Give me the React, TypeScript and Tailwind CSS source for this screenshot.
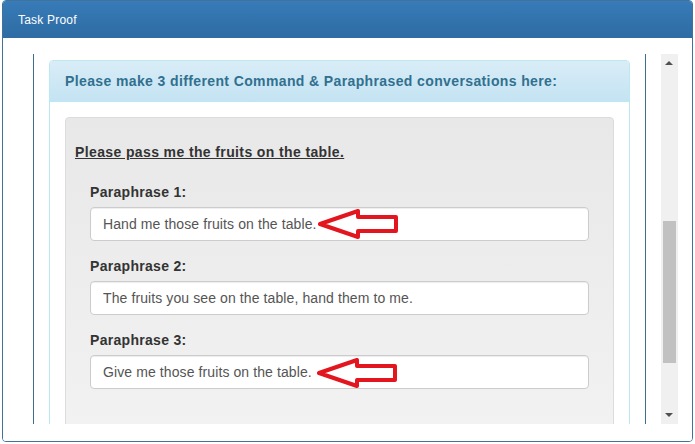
import React from "react";

function Arrow({ left, top }: { left: number; top: number }) {
  return (
    <svg
      className="absolute"
      style={{ left, top }}
      width={82}
      height={32}
      viewBox="0 0 82 32"
    >
      <polygon
        points="2,16 40,3 40,9 78,9 78,23 40,23 40,29"
        fill="none"
        stroke="#e3161f"
        strokeWidth={4}
        strokeLinejoin="round"
      />
    </svg>
  );
}

function Group({
  label,
  value,
  arrow,
}: {
  label: string;
  value: string;
  arrow?: { left: number; top: number };
}) {
  return (
    <div className="mb-[15px]">
      <div className="text-[14px] leading-[20px] font-bold tracking-[0.3px] text-[#333] mb-[5px]">{label}</div>
      <div className="relative h-[34px] border border-[#cccccc] rounded-[4px] bg-white px-[12px] flex items-center text-[14px] tracking-[0.1px] text-[#555] shadow-[inset_0_1px_1px_rgba(0,0,0,0.075)]">
        {value}
        {arrow && <Arrow left={arrow.left} top={arrow.top} />}
      </div>
    </div>
  );
}

export default function App() {
  return (
    <div className="w-[695px] h-[444px] bg-white font-['Liberation_Sans',Arial,sans-serif] overflow-hidden">
      <div className="ml-[2px] w-[691px] h-[442px] border border-[#41729a] rounded-[4px] overflow-hidden flex flex-col">
        <div className="h-[37px] bg-gradient-to-b from-[#377bb8] to-[#2e6ca3] px-[15px] flex items-center text-white text-[12px] tracking-[0.2px]">
          Task Proof
        </div>
        <div className="flex-1 pt-[16px] pl-[30px] bg-white">
          <div className="flex h-[370px] overflow-hidden">
            <div className="w-[613px] border-l border-r border-[#3c6f90] px-[15px] pt-[6px] shrink-0">
              <div className="border border-[#bce8f1] rounded-[4px] bg-white">
                <div className="bg-gradient-to-b from-[#d9edf7] to-[#c4e3f3] px-[15px] py-[10px] border-b border-[#bce8f1] rounded-t-[3px] text-[#31708f] font-bold text-[14px] leading-[20px] tracking-[0.38px] whitespace-nowrap">
                  Please make 3 different Command &amp; Paraphrased conversations here:
                </div>
                <div className="p-[15px]">
                  <div className="border border-[#dcdcdc] rounded-[4px] bg-gradient-to-b from-[#e8e8e8] to-[#f3f3f3] px-[9px] pt-[24px] pb-[60px]">
                    <div className="text-[14px] leading-[20px] font-bold underline tracking-[0.38px] text-[#333]">
                      Please pass me the fruits on the table.
                    </div>
                    <div className="px-[15px] pt-[20px]">
                      <Group
                        label="Paraphrase 1:"
                        value="Hand me those fruits on the table."
                        arrow={{ left: 227, top: 0 }}
                      />
                      <Group
                        label="Paraphrase 2:"
                        value="The fruits you see on the table, hand them to me."
                      />
                      <Group
                        label="Paraphrase 3:"
                        value="Give me those fruits on the table."
                        arrow={{ left: 226, top: 1 }}
                      />
                    </div>
                  </div>
                </div>
              </div>
            </div>
            <div className="w-[15px] shrink-0" />
            <div className="relative w-[17px] h-[370px] bg-[#f0f0f0] shrink-0">
              <div className="absolute left-[4px] top-[7px] w-0 h-0 border-l-[4px] border-r-[4px] border-b-[4px] border-l-transparent border-r-transparent border-b-[#505050]" />
              <div className="absolute left-[2px] top-[167px] w-[13px] h-[142px] bg-[#c1c1c1]" />
              <div className="absolute left-[4px] bottom-[7px] w-0 h-0 border-l-[4px] border-r-[4px] border-t-[4px] border-l-transparent border-r-transparent border-t-[#505050]" />
            </div>
          </div>
        </div>
      </div>
    </div>
  );
}
